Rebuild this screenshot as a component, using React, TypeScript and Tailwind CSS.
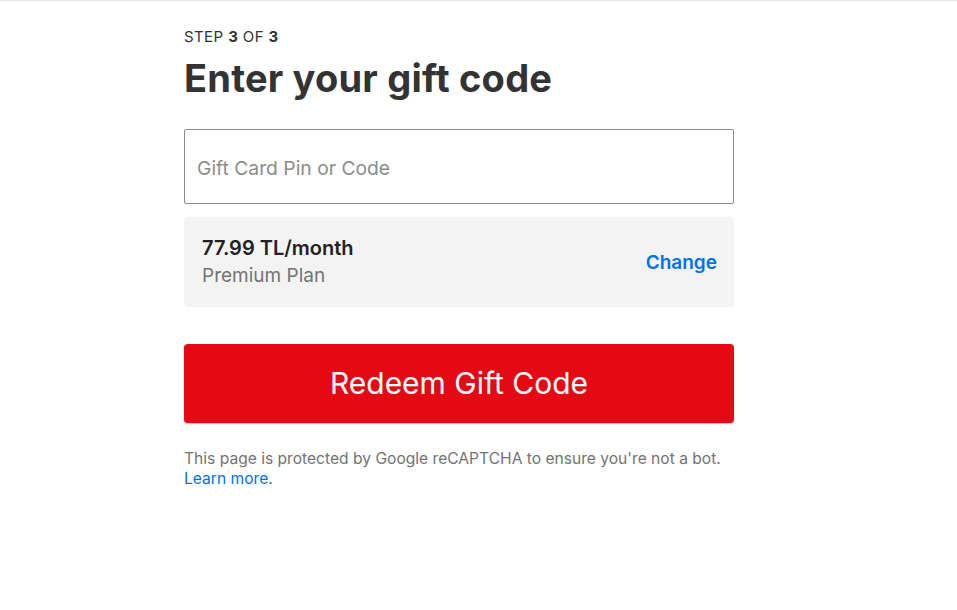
import React from "react";

export default function App() {
  return (
    <div
      className="min-h-[610px] w-full bg-white border-t border-[#e6e6e6]"
      style={{ fontFamily: "Inter, 'Noto Sans', Arial, sans-serif" }}
    >
      <div className="ml-[184px] w-[550px] pt-[26px]">
        <div className="text-[15px] leading-[20px] text-[#333] tracking-[0.4px]">
          STEP <b>3</b> OF <b>3</b>
        </div>
        <h1 className="mt-[9px] text-[38px] leading-[44px] font-bold text-[#333] tracking-[0.2px]">
          Enter your gift code
        </h1>
        <div className="mt-[29px] h-[75px] w-[550px] rounded-[2px] border border-[#8c8c8c] flex items-center px-[12px] pt-[4px]">
          <input
            className="w-full bg-transparent text-[19.3px] text-[#333] placeholder:text-[#8c8c8c] outline-none"
            placeholder="Gift Card Pin or Code"
          />
        </div>
        <div className="mt-[13px] h-[90px] rounded-[4px] bg-[#f3f3f3] flex items-center justify-between pl-[18px] pr-[17px]">
          <div>
            <div className="text-[20px] leading-[27px] font-semibold text-[#222]">77.99 TL/month</div>
            <div className="text-[19px] leading-[27px] text-[#737373]">Premium Plan</div>
          </div>
          <a className="mt-[2px] text-[19px] font-semibold text-[#0071eb]">Change</a>
        </div>
        <button className="mt-[37px] h-[79px] w-[550px] rounded-[4px] bg-[#e50914] text-white text-[30px] shadow-[0_1px_1px_rgba(0,0,0,0.25)]">
          Redeem Gift Code
        </button>
        <p className="mt-[26px] text-[15.6px] leading-[20px] text-[#737373]">
          This page is protected by Google reCAPTCHA to ensure you're not a bot.
          <br />
          <a className="text-[#0071eb]">Learn more.</a>
        </p>
      </div>
    </div>
  );
}
